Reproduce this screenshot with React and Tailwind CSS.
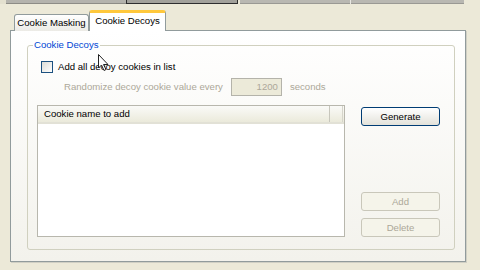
export default function App() {
  return (
    <div
      className="relative w-[480px] h-[270px] overflow-hidden bg-[#ece9d8] text-[9.6px] leading-[12px] text-black flex flex-col"
      style={{ fontFamily: '"Liberation Sans", Arial, sans-serif' }}
    >
      {/* Buttons cut off at the top */}
      <div className="flex h-[4px] shrink-0">
        <div className="w-[6px] bg-[#e3e0cf]" />
        <div className="w-[120px] bg-[#b4b3ad] border-b border-[#8d8c86]" />
        <div className="w-[112px] bg-[#a2a19b] border-x border-b border-[#2e2e2e]" />
        <div className="w-[2px]" />
        <div className="w-[110px] bg-[#b9b8b2] border-b border-[#9a9994]" />
        <div className="w-[1px] bg-[#e8e7e2]" />
        <div className="w-[113px] bg-[#b9b8b2] border-b border-[#9a9994]" />
      </div>

      {/* Tabs */}
      <div className="flex items-end ml-[14px] mt-[6px] h-[21px] shrink-0 relative z-10 -mb-px">
        <div className="h-[17px] w-[75px] flex items-center justify-center border border-b-0 border-[#919b9c] rounded-t-[3px] bg-gradient-to-b from-white to-[#ecebe6]">
          Cookie Masking
        </div>
        <div className="h-[21px] w-[77px] flex items-center justify-center border border-b-0 border-[#919b9c] border-t-[3px] border-t-[#ffc83c] rounded-t-[3px] bg-white pb-[2px]">
          Cookie Decoys
        </div>
      </div>

      {/* Tab page */}
      <div className="ml-[10px] w-[456px] h-[232px] border border-[#919b9c] bg-gradient-to-b from-white to-[#f3f2ec] shadow-[1px_1px_0_#d0cfc4] pt-[8px] pl-[16px]">
        <fieldset className="w-[428px] h-[211px] border border-[#d0d0bf] rounded-[3px] pl-[13px]">
          <legend className="-ml-[8px] px-[1px] text-[#0046d5]">Cookie Decoys</legend>

          <div className="flex items-center mt-[10px] h-[12px]">
            <div className="w-[12px] h-[12px] border border-[#1c5180] bg-gradient-to-br from-[#dcdcd6] to-white" />
            <span className="ml-[5px]">Add all decoy cookies in list</span>
          </div>

          <div className="flex items-center mt-[5px] h-[18px] ml-[23px] text-[#aca899]">
            <span>Randomize decoy cookie value every</span>
            <div className="ml-[8px] w-[51px] h-[18px] border border-[#b4b3aa] bg-[#ecead9] flex items-center justify-end pr-[3px]">
              1200
            </div>
            <span className="ml-[8px]">seconds</span>
          </div>

          <div className="flex mt-[9px] ml-[-4px]">
            <div className="w-[308px] h-[132px] border border-[#b8b7ad] bg-white flex flex-col">
              <div className="flex h-[18px] bg-gradient-to-b from-[#fafaf8] to-[#ebeadb] border-b-2 border-[#e2e1d6]">
                <div className="w-[292px] flex items-center pl-[6px] border-r border-[#c7c6bc]">
                  Cookie name to add
                </div>
                <div className="w-[13px] border-r border-[#d6d5cb]" />
              </div>
            </div>

            <div className="ml-[16px] w-[79px] flex flex-col">
              <button className="mt-[2px] h-[19px] border border-[#003c74] rounded-[3px] bg-gradient-to-b from-white to-[#e3e2da] flex items-center justify-center">
                Generate
              </button>
              <button className="mt-[66px] h-[19px] border border-[#c9c7ba] rounded-[3px] bg-[#f5f4ea] text-[#aca899] flex items-center justify-center">
                Add
              </button>
              <button className="mt-[7px] h-[19px] border border-[#c9c7ba] rounded-[3px] bg-[#f5f4ea] text-[#aca899] flex items-center justify-center">
                Delete
              </button>
            </div>
          </div>
        </fieldset>
      </div>

      {/* Mouse pointer */}
      <svg className="absolute left-[98px] top-[54px]" width="12" height="18" viewBox="0 0 12 18">
        <path d="M0.5 0.5 L0.5 14 L3.5 11 L6 16.5 L8 15.5 L5.5 10.5 L10 10.5 Z" fill="white" stroke="#222" strokeWidth="1" />
      </svg>
    </div>
  );
}
